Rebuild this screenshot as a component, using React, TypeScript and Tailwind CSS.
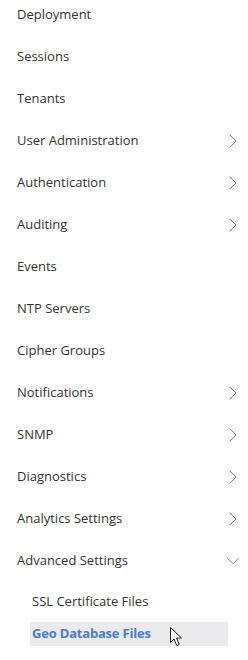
import { ChevronRight, ChevronDown } from 'lucide-react';

const ITEMS: { label: string; sub?: boolean }[] = [
  { label: 'Deployment' },
  { label: 'Sessions' },
  { label: 'Tenants' },
  { label: 'User Administration', sub: true },
  { label: 'Authentication', sub: true },
  { label: 'Auditing', sub: true },
  { label: 'Events' },
  { label: 'NTP Servers' },
  { label: 'Cipher Groups' },
  { label: 'Notifications', sub: true },
  { label: 'SNMP', sub: true },
  { label: 'Diagnostics', sub: true },
  { label: 'Analytics Settings', sub: true },
];

function Cursor() {
  return (
    <svg width="16" height="22" viewBox="0 0 16 22" className="absolute left-[139px] top-[4px]">
      <path d="M1.5 1.5 L1.5 16.5 L5 13 L7.8 19.5 L10.2 18.4 L7.5 12 L12.5 12 Z" fill="#fff" stroke="#222" strokeWidth="1" strokeLinejoin="miter" />
    </svg>
  );
}

export default function App() {
  return (
    <div className="w-[248px] h-[660px] bg-white overflow-hidden text-[13px] text-[#333] font-['Open_Sans',sans-serif]">
      <div className="-mt-[6px]">
        {ITEMS.map((item) => (
          <div key={item.label} className="h-[42px] flex items-center justify-between pl-[17px] pr-[3px]">
            <span>{item.label}</span>
            {item.sub && <ChevronRight size={24} strokeWidth={0.9} className="text-[#6a6f7e]" />}
          </div>
        ))}
        <div className="h-[42px] flex items-center justify-between pl-[17px] pr-[4px]">
          <span>Advanced Settings</span>
          <ChevronDown size={22} strokeWidth={0.95} className="text-[#6a6f7e]" />
        </div>
        <div className="pt-1 pl-[30px] pr-[20px]">
          <div className="py-1">
            <div className="h-6 flex items-center px-[2px]">SSL Certificate Files</div>
          </div>
          <div className="py-1">
            <div className="relative h-6 flex items-center px-[2px] bg-[#ebebee] font-bold text-[#4a7dc9] tracking-[-0.2px]">
              Geo Database Files
              <Cursor />
            </div>
          </div>
        </div>
      </div>
    </div>
  );
}
